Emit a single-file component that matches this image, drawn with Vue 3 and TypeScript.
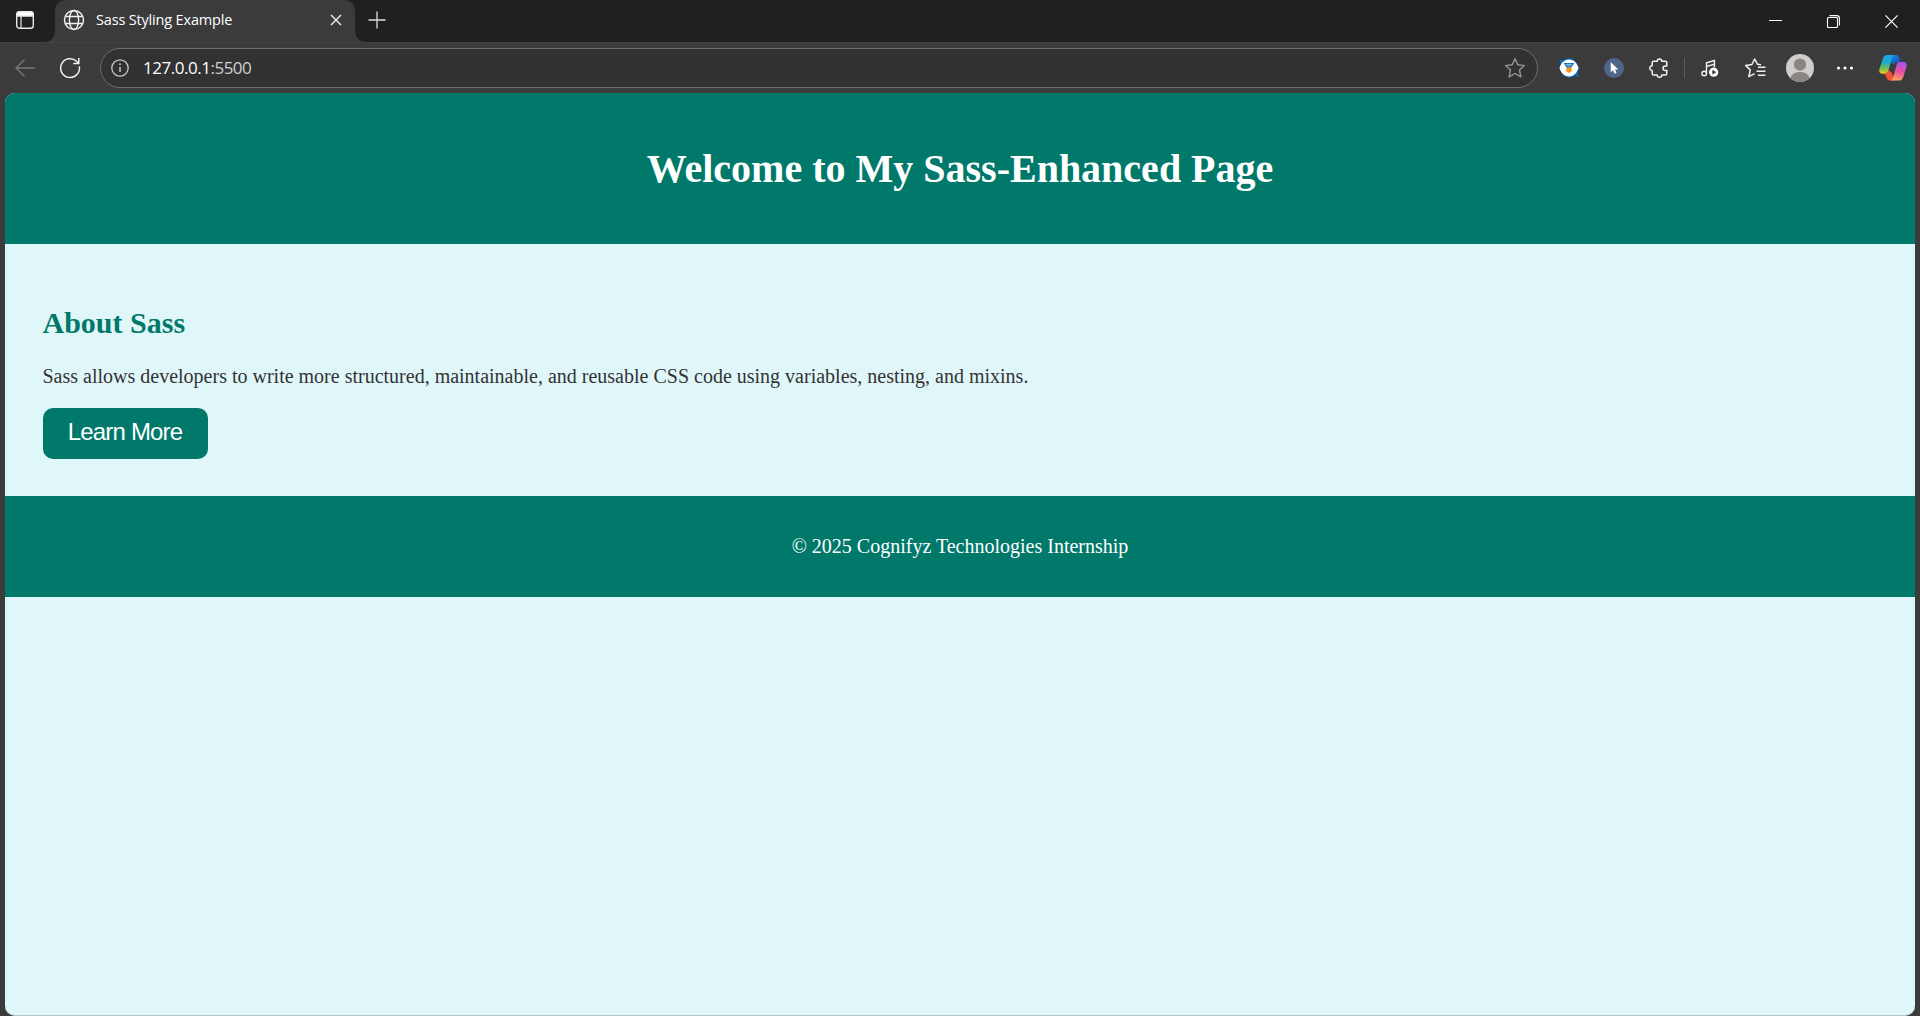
<script setup lang="ts">
const pageTitle: string = 'Sass Styling Example'
const host: string = '127.0.0.1'
const port: string = ':5500'
</script>

<template>
  <div class="browser">
    <div class="tabstrip">
      <div class="workspace">
        <svg width="20" height="20" viewBox="0 0 20 20" fill="none" stroke="#e8e8e8" stroke-width="1.4">
          <rect x="1.7" y="1.7" width="16.6" height="16.6" rx="2.8" />
          <path d="M1.8 6V4.5a2.8 2.8 0 0 1 2.8-2.8h10.8a2.8 2.8 0 0 1 2.8 2.8V6z" fill="#fff" />
          <path d="M6 6v12" stroke-width="1.2" />
        </svg>
      </div>
      <div class="tab">
        <svg class="globe" width="22" height="22" viewBox="0 0 22 22" fill="none" stroke="#f2f2f2" stroke-width="1.4">
          <circle cx="11" cy="11" r="9.5" />
          <ellipse cx="11" cy="11" rx="4.6" ry="9.5" />
          <path d="M2.2 7.5h17.6M2.2 14.5h17.6" />
        </svg>
        <span class="tab-title">{{ pageTitle }}</span>
        <svg class="tab-close" width="12" height="12" viewBox="0 0 12 12" stroke="#f0f0f0" stroke-width="1.4">
          <path d="M1 1l10 10M11 1L1 11" />
        </svg>
      </div>
      <div class="new-tab">
        <svg width="18" height="18" viewBox="0 0 18 18" stroke="#ddd" stroke-width="1.3">
          <path d="M9 .5v17M.5 9h17" />
        </svg>
      </div>
      <div class="controls">
        <div class="control"><svg width="13" height="13" viewBox="0 0 13 13" stroke="#fff"><path d="M0 5.5h13" /></svg></div>
        <div class="control">
          <svg width="13" height="13" viewBox="0 0 13 13" fill="none" stroke="#fff" stroke-width="1.1">
            <rect x=".5" y="2.5" width="10" height="10" rx="1" />
            <path d="M2.5.6h7.2a2.7 2.7 0 0 1 2.7 2.7v7.2" />
          </svg>
        </div>
        <div class="control"><svg width="13" height="13" viewBox="0 0 13 13" stroke="#fff" stroke-width="1.2"><path d="M.4.4l12.2 12.2M12.6.4L.4 12.6" /></svg></div>
      </div>
    </div>

    <div class="toolbar">
      <div class="tool">
        <svg width="20" height="18" viewBox="0 0 20 18" fill="none" stroke="#777" stroke-width="1.3"><path d="M20 9H1M9.5.7L1 9l8.5 8.3" /></svg>
      </div>
      <div class="tool">
        <svg width="22" height="22" viewBox="0 0 22 22" fill="none" stroke="#f0f0f0" stroke-width="1.5">
          <path d="M20.3 9.3A9.4 9.4 0 1 1 17.6 4.3L19.6 6.2M19.8 1v5.5h-5.6" />
        </svg>
      </div>
      <div class="address">
        <svg width="18" height="18" viewBox="0 0 18 18" fill="none" stroke="#c8c8c8" stroke-width="1.3">
          <circle cx="9" cy="9" r="8.2" />
          <path d="M9 8v5" stroke-width="1.5" />
          <circle cx="9" cy="5.3" r=".95" fill="#c8c8c8" stroke="none" />
        </svg>
        <span class="url">{{ host }}<span class="port">{{ port }}</span></span>
        <svg class="star" width="22" height="22" viewBox="0 0 22 22" fill="none" stroke="#969696" stroke-width="1.4" stroke-linejoin="round">
          <path d="M11 1.7l2.8 6.1 6.6.8-4.9 4.5 1.4 6.8-5.9-3.4-5.9 3.4 1.4-6.8-4.9-4.5 6.6-.8z" />
        </svg>
      </div>
      <div class="tool">
        <svg width="20" height="20" viewBox="0 0 20 20">
          <path d="M.5 1.500l3.500 1A9 9 0 0 1 18.200 6L20 10l-1.200 4 .7 5-3.500-1.500A9 9 0 0 1 2 14L.3 10 1.500 6z" fill="#0869c7" />
          <path d="M.5 10C2 5.500 5 1.500 10 1.500s8 4 9.500 8.500c-1.500 4.500-4.500 8.500-9.500 8.500S2 14.500.5 10z" fill="#fff" />
          <path d="M4.700 5h10.600l-3.300 5H8z" fill="#176cba" />
          <path d="M7 6.400h6M8 8h4" stroke="#b9d5ec" stroke-width=".8" />
          <circle cx="10" cy="12" r="2.700" fill="#ff920c" />
        </svg>
      </div>
      <div class="tool">
        <svg width="20" height="20" viewBox="0 0 20 20">
          <circle cx="10" cy="10" r="10" fill="#4d6689" />
          <path d="M6.700 4v10.200l2.400-2 1.500 3.500 1.900-.9-1.500-3.200h3.300z" fill="#fff" />
        </svg>
      </div>
      <div class="tool">
        <svg width="20" height="20" viewBox="0 0 20 20" fill="none" stroke="#f0f0f0" stroke-width="1.500" stroke-linejoin="round">
          <path d="M4.500 3.200h3.700c0-3 4.600-3 4.600 0h3.500q1.500 0 1.500 1.500V8h-1.300c-3.300 0-3.300 4.500 0 4.500h1.300v3.100q0 1.500-1.500 1.500h-3.500c0 3-4.600 3-4.600 0H4.700q-1.500 0-1.500-1.500v-3.200c-3.200 0-3.200-4.600 0-4.600V4.700q0-1.500 1.300-1.500z" />
        </svg>
      </div>
      <div class="divider"></div>
      <div class="tool">
        <svg width="18" height="20" viewBox="0 0 18 20" fill="none" stroke="#f0f0f0" stroke-width="1.400">
          <circle cx="3.200" cy="15.500" r="2.300" />
          <path d="M5.500 15.500V4.800L13.400 2.500V9M5.500 8.500l7.900-2.400" />
          <circle cx="12.700" cy="14.200" r="4.600" fill="#fff" stroke="none" />
          <path d="M11.400 11.800v4.800l3.800-2.400z" fill="#333" stroke="none" />
        </svg>
      </div>
      <div class="tool">
        <svg width="22" height="22" viewBox="0 0 22 22" fill="none" stroke="#f0f0f0" stroke-width="1.500" stroke-linejoin="round">
          <path d="M17 7.800l-3.400-.5-2.900-5.300-2.800 5.500-6.300.9 4.600 4.500-1.300 6.800 5.700-3M14 10.300h7.500M12.500 14.300h9M14 18.300h7.500" />
        </svg>
      </div>
      <div class="tool">
        <svg width="28" height="28" viewBox="0 0 28 28">
          <circle cx="14" cy="14" r="14" fill="#d0ceca" />
          <circle cx="14" cy="10.600" r="6.100" fill="#8b8683" />
          <path d="M4.300 24.100C5.500 20.300 9.500 18 14 18s8.500 2.300 9.700 6.100A14 14 0 0 1 4.300 24.100z" fill="#8b8683" />
        </svg>
      </div>
      <div class="tool">
        <svg width="18" height="6" viewBox="0 0 18 6" fill="#fff"><circle cx="2.500" cy="3" r="1.600" /><circle cx="9" cy="3" r="1.600" /><circle cx="15.500" cy="3" r="1.600" /></svg>
      </div>
      <div class="tool copilot">
        <svg width="28" height="26" viewBox="0 0 28 26">
          <defs>
            <linearGradient id="cool" x1="0" y1="0" x2="0" y2="1">
              <stop offset="0" stop-color="#239fec" /><stop offset=".4" stop-color="#18acce" /><stop offset=".72" stop-color="#79bd51" /><stop offset="1" stop-color="#f2cc18" />
            </linearGradient>
            <linearGradient id="warm" x1=".6" y1="0" x2=".4" y2="1">
              <stop offset="0" stop-color="#a556ed" /><stop offset=".5" stop-color="#ec4ea2" /><stop offset="1" stop-color="#ffa35c" />
            </linearGradient>
            <linearGradient id="fold" x1="0" y1="0" x2="1" y2="1">
              <stop offset="0" stop-color="#168ee0" /><stop offset="1" stop-color="#1744be" />
            </linearGradient>
          </defs>
          <path d="M13 0h4c2 0 2.700 1 3.300 3l1.200 4H18c-2 0-2.800.9-3.400 3L12 7z" fill="url(#fold)" />
          <path d="M8.600 0H16c-1.700 0-2.500 1.500-3 3.300L9.500 15c-.7 2.500-2 3.700-4 3.700H3.600C.6 18.700-.3 16.500.5 13.700L4 3.300C4.800 1.100 6.300 0 8.600 0z" fill="url(#cool)" />
          <path d="M5.500 18.700c2 0 3.300-1.200 4-3.700l3.300 2.800L16 25.600h-5c-2 0-2.900-1-3.400-3z" fill="#f25438" />
          <path d="M19 7h5.500c2.900 0 3.700 2.300 3 4.800L24.300 22c-.8 2.500-2.300 3.600-4.700 3.600H11c1.800 0 2.600-1.400 3.200-3.500L17.600 10c.5-2 1-3 3-3z" fill="url(#warm)" />
        </svg>
      </div>
    </div>

    <div class="viewport">
      <header><h1>Welcome to My Sass-Enhanced Page</h1></header>
      <section>
        <h2>About Sass</h2>
        <p>Sass allows developers to write more structured, maintainable, and reusable CSS code using variables, nesting, and mixins.</p>
        <button type="button">Learn More</button>
      </section>
      <footer><p>© 2025 Cognifyz Technologies Internship</p></footer>
    </div>
  </div>
</template>

<style>
body { margin: 0; overflow: hidden; background: #3b3b3b; }
</style>

<style scoped>
* { box-sizing: border-box; }
svg { display: block; flex: none; overflow: visible; }
.browser {
  height: 1016px;
  display: flex;
  flex-direction: column;
  background: #3b3b3b;
  font-family: "Open Sans", "Noto Sans", sans-serif;
}
.tabstrip { height: 42px; display: flex; background: #202020; flex: none; }
.workspace { width: 55px; padding: 10px 0 0 15px; }
.tab {
  position: relative;
  width: 300px;
  display: flex;
  align-items: center;
  padding: 0 13px 2px 8px;
  background: #3b3b3b;
  border-radius: 10px 10px 0 0;
}
.tab::before, .tab::after {
  content: "";
  position: absolute;
  bottom: 0;
  width: 10px;
  height: 10px;
}
.tab::before { left: -10px; background: radial-gradient(circle at 0 0, #202020 9.5px, #3b3b3b 10px); }
.tab::after { right: -10px; background: radial-gradient(circle at 100% 0, #202020 9.5px, #3b3b3b 10px); }
.tab-title { margin-left: 11px; font-size: 14.5px; line-height: 20px; letter-spacing: -0.17px; color: #fff; white-space: nowrap; }
.tab-close { margin-left: auto; }
.new-tab { padding: 11px 0 0 13px; }
.controls { display: flex; margin-left: auto; }
.control { width: 58px; padding: 15px 0 0 23px; }
.toolbar { height: 51px; flex: none; display: flex; align-items: center; padding: 0 2px; border-top: 1px solid #424242; }
.tool { width: 45px; height: 40px; display: flex; align-items: center; justify-content: center; flex: none; }
.copilot { width: 50px; margin-left: 1px; }
.address {
  flex: 1;
  height: 40px;
  display: flex;
  align-items: center;
  margin: 0 8px;
  padding: 0 11px 0 10px;
  background: #323232;
  border: 1px solid #6e6e6e;
  border-radius: 20px;
}
.url { margin-left: 14px; color: #fff; font-size: 17px; line-height: 22px; letter-spacing: -0.48px; }
.port { color: #cfcfcf; }
.star { margin-left: auto; }
.divider { width: 1px; height: 20px; margin: 0 2px 0 3px; background: #5b5b5b; }
.viewport {
  flex: 1;
  margin: 0 5px;
  overflow: hidden;
  background: #e0f7fa;
  border-radius: 10px;
  border-bottom: 1px solid #b5c5c7;
  font-family: "Liberation Serif", "Times New Roman", serif;
  font-size: 20px;
  color: #333;
}
header { height: 151px; padding-top: 53px; background: #00796b; color: #fff; text-align: center; }
h1 { margin: 0; font-size: 40px; line-height: 46px; }
section { height: 252px; padding: 61px 37.5px 0; }
h2 { margin: 0; font-size: 30px; line-height: 35px; color: #00796b; }
section p { margin: 25px 0 20px; line-height: 23px; }
button {
  display: block;
  width: 165px;
  height: 51px;
  padding: 0 0 3px;
  border: 0;
  border-radius: 10px;
  background: #00796b;
  color: #fff;
  font: 24px "Liberation Sans", Arial, sans-serif;
  letter-spacing: -0.8px;
}
footer { height: 101px; padding-top: 39px; background: #00796b; color: #fff; text-align: center; }
footer p { margin: 0; line-height: 23px; }
</style>
